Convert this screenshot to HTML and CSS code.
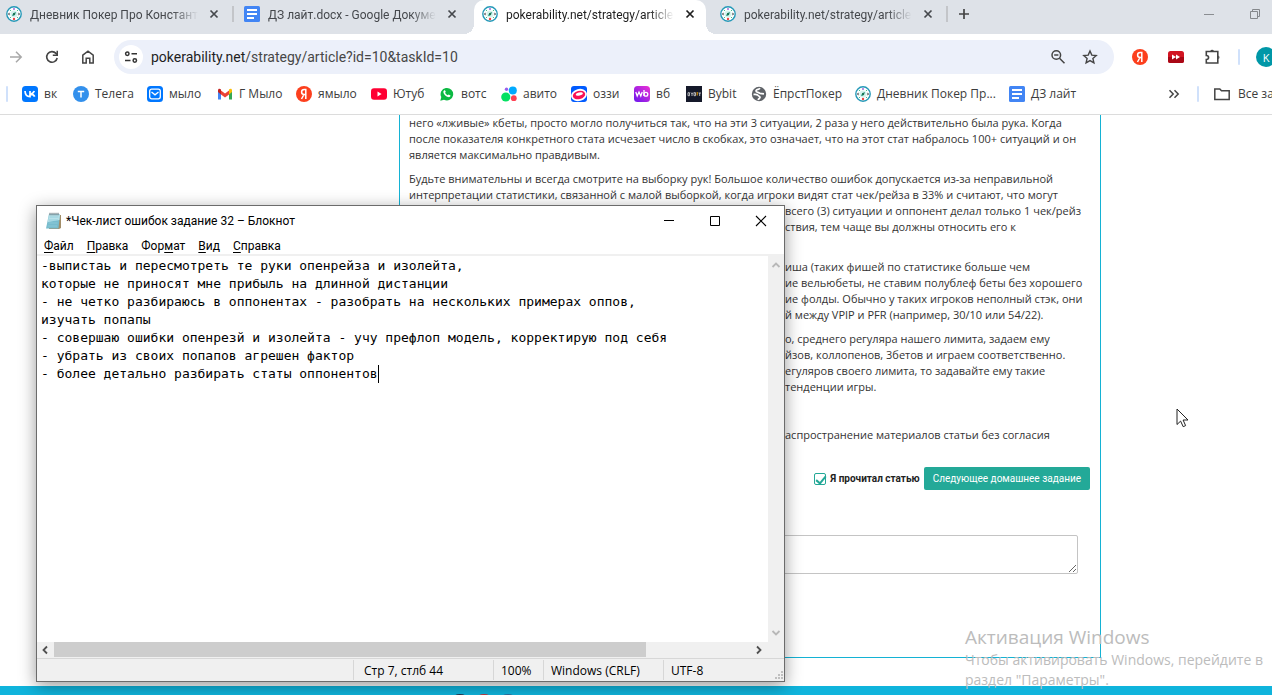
FILE: index.html
```
<!DOCTYPE html>
<html lang="ru">
<head>
<meta charset="utf-8">
<title>pokerability.net/strategy/article</title>
<link rel="stylesheet" href="styles.css">
</head>
<body>
<svg class="defs" aria-hidden="true">
  <symbol id="poker" viewBox="0 0 16 16">
    <circle cx="8" cy="8" r="7.2" fill="#fff" stroke="#2499b8" stroke-width="1.4"/>
    <circle cx="8" cy="8" r="3.600" fill="#d4f3ee"/>
    <path d="M6 9.500l1.500-2.500 2.500-1-1 3-2 1z" fill="#29977e"/>
    <circle cx="8" cy="8" r="1" fill="#176a48"/>
    <circle cx="8" cy="3" r="1" fill="#a56ad8"/><circle cx="8" cy="13" r="1.200" fill="#ee4545"/>
    <path d="M2 8l1.500-1.500V9.500zM14 8l-1.500-1.500V9.500z" fill="#222"/>
    <circle cx="4.500" cy="4.500" r=".6" fill="#2bb673"/><circle cx="11.500" cy="4.500" r=".6" fill="#2bb673"/><circle cx="4.500" cy="11.500" r=".6" fill="#2bb673"/><circle cx="11.500" cy="11.500" r=".6" fill="#2bb673"/>
  </symbol>
  <symbol id="docs" viewBox="0 0 16 16">
    <rect width="16" height="16" rx="1.500" fill="#4285f4"/>
    <path d="M3 4h10M3 8h10M3 12h7" stroke="#fff" stroke-width="2"/>
  </symbol>
  <symbol id="close" viewBox="0 0 16 16">
    <path d="M4.500 4.500l7 7M11.500 4.500l-7 7" stroke="currentColor" stroke-width="1.700" fill="none"/>
  </symbol>
  <symbol id="yandex" viewBox="0 0 16 16">
    <circle cx="8" cy="8" r="8" fill="#fc3f1d"/>
    <path d="M9.800 13V3.500H8.300C6.500 3.500 5.600 4.500 5.600 6c0 1.600.9 2.500 2.700 2.500h1.500M8 8.500L5.500 13" fill="none" stroke="#fff" stroke-width="1.500"/>
  </symbol>
</svg>

<div class="browser">
  <header class="chrome">
    <div class="tabstrip">
      <div class="tab tab-first"><svg class="ico"><use href="#poker"/></svg><span class="tab-title">Дневник Покер Про Константи</span><button class="icon-btn" aria-label="Закрыть"><svg class="ico"><use href="#close"/></svg></button></div>
      <span class="tab-gap tab-sep"></span>
      <div class="tab"><svg class="ico"><use href="#docs"/></svg><span class="tab-title">ДЗ лайт.docx - Google Докуме</span><button class="icon-btn" aria-label="Закрыть"><svg class="ico"><use href="#close"/></svg></button></div>
      <span class="tab-gap"></span>
      <div class="tab tab-active"><svg class="ico"><use href="#poker"/></svg><span class="tab-title">pokerability.net/strategy/article</span><button class="icon-btn" aria-label="Закрыть"><svg class="ico"><use href="#close"/></svg></button></div>
      <span class="tab-gap"></span>
      <div class="tab"><svg class="ico"><use href="#poker"/></svg><span class="tab-title">pokerability.net/strategy/article</span><button class="icon-btn" aria-label="Закрыть"><svg class="ico"><use href="#close"/></svg></button></div>
      <span class="tab-gap tab-sep"></span>
      <button class="icon-btn new-tab" aria-label="Новая вкладка"><svg class="ico" viewBox="0 0 16 16"><path d="M8 3v10M3 8h10" stroke="#444" stroke-width="1.700"/></svg></button>
      <div class="window-btns">
        <button class="icon-btn" aria-label="Свернуть"><svg class="ico" viewBox="0 0 16 16"><path d="M3 8.500h10" stroke="#8a8d91"/></svg></button>
        <button class="icon-btn" aria-label="Свернуть в окно"><svg class="ico" viewBox="0 0 16 16"><path d="M3.500 5.500h7v7h-7zM5.500 5.500v-2h7v7h-2" fill="none" stroke="#85888c"/></svg></button>
      </div>
    </div>

    <div class="toolbar">
      <div class="nav">
        <button class="icon-btn" aria-label="Вперёд"><svg class="ico" viewBox="0 0 16 16"><path d="M2 8h11M8 2.800L13.200 8 8 13.200" fill="none" stroke="#a8a8a8" stroke-width="1.500"/></svg></button>
        <button class="icon-btn" aria-label="Обновить"><svg class="ico" viewBox="0 0 16 16"><path d="M13.200 9A5.300 5.300 0 1 1 12 4.400l1 1.100" fill="none" stroke="#444" stroke-width="1.600"/><path d="M14 1.800V7H8.800V5.500h3.700V1.800z" fill="#444"/></svg></button>
        <button class="icon-btn" aria-label="Домой"><svg class="ico" viewBox="0 0 16 16"><path d="M2.800 6.200L8 2.200l5.200 4V14H9.800V9.300H6.200V14H2.800z" fill="none" stroke="#444" stroke-width="1.500"/></svg></button>
      </div>
      <div class="omnibox">
        <button class="icon-btn site-info" aria-label="Сведения о сайте"><svg class="ico" viewBox="0 0 16 16"><g fill="none" stroke="#333" stroke-width="1.500"><circle cx="4.300" cy="4.800" r="1.700"/><path d="M8.500 4.800H14M2 11.500h5.500"/><circle cx="11.800" cy="11.500" r="1.700"/></g></svg></button>
        <a class="url" href="#"><span class="host">pokerability.net</span>/strategy/article?id=10&amp;taskId=10</a>
        <button class="icon-btn" aria-label="Масштаб"><svg class="ico" viewBox="0 0 16 16"><g fill="none" stroke="#444" stroke-width="1.500"><circle cx="6.300" cy="6" r="4.300"/><path d="M9.500 9.200l5 5M4.200 6h4.200"/></g></svg></button>
        <button class="icon-btn" aria-label="Добавить в закладки"><svg class="ico" viewBox="0 0 16 16"><path d="M8 2l1.800 4.100 4.400.4-3.300 3 1 4.400L8 11.600l-3.900 2.300 1-4.400-3.300-3 4.400-.4z" fill="none" stroke="#444" stroke-width="1.400"/></svg></button>
      </div>
      <div class="extensions">
        <button class="icon-btn" aria-label="Яндекс"><svg class="ico"><use href="#yandex"/></svg></button>
        <button class="icon-btn" aria-label="Ускорение видео"><svg class="ico" viewBox="0 0 16 16"><rect y="2" width="16" height="12" rx="2.500" fill="#d21522"/><path d="M0 8h16v4a2 2 0 0 1-2 2H2a2 2 0 0 1-2-2z" fill="#a90715"/><path d="M4 5.500L8 8l-4 2.500zM8 5.500L12 8l-4 2.500z" fill="#fff"/></svg></button>
        <button class="icon-btn" aria-label="Расширения"><svg class="ico" viewBox="0 0 16 16"><path d="M2.300 2.500h11.500v11.500h-11.500v-3.500c3 0 3-4 0-4z" fill="none" stroke="#444" stroke-width="1.600"/><path d="M6.300 2a1.900 1.900 0 0 1 3.600 0zM14.200 6.400a1.900 1.900 0 0 1 0 3.600z" fill="#444"/></svg></button>
        <span class="divider"></span>
        <button class="avatar" aria-label="Профиль">K</button>
      </div>
    </div>

    <nav class="bookmarks">
      <span class="divider"></span>
      <div class="bm-list">
        <a class="bm" href="#"><svg class="ico" viewBox="0 0 16 16"><rect width="16" height="16" rx="3.500" fill="#07f"/><path d="M3 5c.2 3.500 2 5.700 5 5.700V5M8 8c2 0 3.500-1.200 4.300-3M8 7.800c2 .2 3.900 1 4.700 2.900" fill="none" stroke="#fff" stroke-width="1.700"/></svg>вк</a>
        <a class="bm" href="#"><svg class="ico" viewBox="0 0 16 16"><circle cx="8" cy="8" r="8" fill="#3390ec"/><path d="M4.800 5.500h6.400M8 5.500v6" stroke="#fff" stroke-width="1.500"/></svg>Телега</a>
        <a class="bm" href="#"><svg class="ico" viewBox="0 0 16 16"><rect width="16" height="16" rx="3.500" fill="#07f"/><rect x="2.700" y="3.200" width="10.600" height="9.600" rx="2" fill="none" stroke="#fff" stroke-width="1.300"/><path d="M4.500 6L8 8.800 11.500 6" fill="none" stroke="#fff" stroke-width="1.300"/></svg>мыло</a>
        <a class="bm" href="#"><svg class="ico" viewBox="0 0 16 16"><path d="M1 4v9.500h3V7z" fill="#4285f4"/><path d="M15 4v9.500h-3V7z" fill="#34a853"/><path d="M4 4.500L8 7.500l4-3v4l-4 3-4-3z" fill="#ea4335"/><path d="M1 4.500C1 2.500 2.700 2.300 4 3.500v5L1 6z" fill="#c5221f"/><path d="M15 4.500c0-2-1.700-2.200-3-1v5L15 6z" fill="#fbbc04"/></svg>Г Мыло</a>
        <a class="bm" href="#"><svg class="ico"><use href="#yandex"/></svg>ямыло</a>
        <a class="bm" href="#"><svg class="ico" viewBox="0 0 16 16"><rect y="2.300" width="16" height="11.400" rx="3" fill="#ff0033"/><path d="M6.500 5.500L10.600 8l-4.100 2.500z" fill="#fff"/></svg>Ютуб</a>
        <a class="bm" href="#"><svg class="ico" viewBox="0 0 16 16"><path d="M1.300 14.800l1-3.700A6.300 6.300 0 1 1 5 13.800z" fill="#0cb943"/><path d="M5 4.500c.8-.8 1.300-.2 1.800 1.300l-.7.900c.6 1.200 1.400 2 2.700 2.500l.8-.8 1.900 1c0 1.500-1.400 2-2.600 1.600C6.500 10.200 4.500 8 4.300 6c0-.6.200-1 .7-1.500z" fill="#fff"/></svg>вотс</a>
        <a class="bm" href="#"><svg class="ico" viewBox="0 0 16 16"><circle cx="4.800" cy="11" r="4.600" fill="#04e061"/><circle cx="11.800" cy="4.500" r="4" fill="#00aaff"/><circle cx="12.800" cy="12.200" r="2.900" fill="#ff4053"/><circle cx="5.500" cy="3.300" r="1.700" fill="#965eeb"/></svg>авито</a>
        <a class="bm" href="#"><svg class="ico" viewBox="0 0 16 16"><rect width="16" height="16" rx="3" fill="#005bff"/><ellipse cx="8" cy="9" rx="8" ry="6" transform="rotate(-14 8 9)" fill="#fff"/><ellipse cx="8" cy="9" rx="6.300" ry="4.200" transform="rotate(-14 8 9)" fill="#f91155"/><ellipse cx="8.300" cy="8" rx="3.600" ry="1.500" transform="rotate(-14 8.300 8)" fill="#fff"/></svg>оззи</a>
        <a class="bm" href="#"><svg class="ico" viewBox="0 0 16 16"><defs><linearGradient id="wb" x1="0" y1="1" x2="1" y2="0"><stop stop-color="#6a17ee"/><stop offset="1" stop-color="#ed30d4"/></linearGradient></defs><rect width="16" height="16" rx="3.500" fill="url(#wb)"/><path d="M1.800 6l1.400 4L5 6l1.800 4L8.200 6M10 4v6" fill="none" stroke="#fff" stroke-width="1.300"/><circle cx="11.900" cy="8.300" r="1.900" fill="none" stroke="#fff" stroke-width="1.300"/></svg>вб</a>
        <a class="bm" href="#"><svg class="ico" viewBox="0 0 16 16"><path d="M0 0h16v16H0z" fill="#15192a"/><path d="M2 6.700v3h1.500v-3zM5 6.500l1 1.500 1-1.500M6 8v2M8 6.700v3h1.500v-3zM12.500 7h2.500M13.700 7v3" fill="none" stroke="#ddd" stroke-width=".8"/><path d="M11.200 6v3.500" stroke="#f7a600"/></svg>Bybit</a>
        <a class="bm" href="#"><svg class="ico" viewBox="0 0 16 16"><circle cx="8" cy="8" r="7.200" fill="#5f6368"/><path d="M9 2.300c-1 1.500-3.500.8-4 2.500-.3 1.600 2.500 1.400 3.500 2.400.8.800 2 .3 4.500.6M2.500 8.300c2 .2 4-.2 4.500 1 .5 1.300 2.200.7 2 2.200-.2 1-1.500 1.300-2 2.300" fill="none" stroke="#fff" stroke-width="1.700"/></svg>ЁпрстПокер</a>
        <a class="bm" href="#"><svg class="ico"><use href="#poker"/></svg>Дневник Покер Пр...</a>
        <a class="bm" href="#"><svg class="ico"><use href="#docs"/></svg>ДЗ лайт</a>
      </div>
      <div class="bm-more">
        <button class="icon-btn" aria-label="Другие закладки"><svg class="ico" viewBox="0 0 16 16"><path d="M3.500 4.300L7.200 8l-3.700 3.700M8.500 4.300L12.200 8l-3.700 3.700" fill="none" stroke="#444" stroke-width="1.500"/></svg></button>
        <span class="divider"></span>
        <a class="bm" href="#"><svg class="ico" viewBox="0 0 16 16"><path d="M.8 3h5l1.700 1.800h7.700v8.700H.8z" fill="none" stroke="#444" stroke-width="1.500"/></svg>Все за</a>
      </div>
    </nav>
  </header>

  <main class="page">
    <article class="card">
      <p>него «лживые» кбеты, просто могло получиться так, что на эти 3 ситуации, 2 раза у него действительно была рука. Когда<br>после показателя конкретного стата исчезает число в скобках, это означает, что на этот стат набралось 100+ ситуаций и он<br>является максимально правдивым.</p>
      <p>Будьте внимательны и всегда смотрите на выборку рук! Большое количество ошибок допускается из-за неправильной<br>интерпретации статистики, связанной с малой выборкой, когда игроки видят стат чек/рейза в 33% и считают, что могут</p>
      <div class="behind">
        <p>всего (3) ситуации и оппонент делал только 1 чек/рейз<br>ствия, тем чаще вы должны относить его к<br>&nbsp;</p>
        <p>иша (таких фишей по статистике больше чем<br>ие вельюбеты, не ставим полублеф беты без хорошего<br>ие фолды. Обычно у таких игроков неполный стэк, они<br>й между VPIP и PFR (например, 30/10 или 54/22).</p>
        <p>о, среднего регуляра нашего лимита, задаем ему<br>йзов, коллопенов, 3бетов и играем соответственно.<br>егуляров своего лимита, то задавайте ему такие<br>тенденции игры.</p>
        <p>&nbsp;</p>
        <p>аспространение материалов статьи без согласия<br>&nbsp;</p>
      </div>
      <div class="actions">
        <input type="checkbox" id="read" checked>
        <label for="read">Я прочитал статью</label>
        <button class="next">Следующее домашнее задание</button>
      </div>
      <textarea class="comment" aria-label="Комментарий"></textarea>
    </article>
  </main>

  <footer class="footer">
    <svg viewBox="0 0 80 9" width="80" height="9"><ellipse cx="20" cy="10" rx="5" ry="2" fill="#27344d"/><ellipse cx="44" cy="10" rx="5" ry="2" fill="#c8363b"/><ellipse cx="68" cy="10" rx="5" ry="2" fill="#2f6f9f"/></svg>
  </footer>
</div>

<section class="notepad" aria-label="Блокнот">
  <div class="np-title">
    <svg class="np-icon" viewBox="0 0 18 18"><path d="M5 3h11v13l-2 1H4z" fill="#a28d68"/><path d="M4 2h11l-1.500 14.500H1z" fill="#78bccd"/><path d="M4 2h11l-.6 6-11.500 2z" fill="#b8e1ea"/><path d="M4.500 5h9M4 8h9M3.500 11h9M3 14h9" stroke="#8fcbd9" stroke-width=".8"/><path d="M5 .8v2.500M7 .8v2.500M9 .8v2.500M11 .8v2.500M13 .8v2.500" stroke="#435861" stroke-width=".9"/></svg>
    <span class="np-name">*Чек-лист ошибок задание 32 – Блокнот</span>
    <button class="np-btn" aria-label="Свернуть"><svg viewBox="0 0 12 12"><path d="M1 5.500h10" stroke="#000"/></svg></button>
    <button class="np-btn" aria-label="Развернуть"><svg viewBox="0 0 12 12"><path d="M1.500 1.500h9v9h-9z" fill="none" stroke="#000"/></svg></button>
    <button class="np-btn" aria-label="Закрыть"><svg viewBox="0 0 12 12"><path d="M1 1l10 10M11 1L1 11" stroke="#000" stroke-width="1.100"/></svg></button>
  </div>
  <div class="np-menu">
    <button><u>Ф</u>айл</button><button><u>П</u>равка</button><button>Фор<u>м</u>ат</button><button><u>В</u>ид</button><button><u>С</u>правка</button>
  </div>
  <div class="np-body">
    <div class="np-edit">
      <textarea class="np-text" aria-label="Текст" spellcheck="false" wrap="off">-выпистаь и пересмотреть те руки опенрейза и изолейта,
которые не приносят мне прибыль на длинной дистанции
- не четко разбираюсь в оппонентах - разобрать на нескольких примерах оппов,
изучать попапы
- совершаю ошибки опенрезй и изолейта - учу префлоп модель, корректирую под себя
- убрать из своих попапов агрешен фактор
- более детально разбирать статы оппонентов</textarea>
      <span class="caret"></span>
    </div>
    <div class="vscroll">
      <svg viewBox="0 0 10 6"><path d="M1.500 5L5 1.500 8.500 5" fill="none" stroke="#b8b8b8" stroke-width="1.800"/></svg>
      <svg viewBox="0 0 10 6"><path d="M1.500 1L5 4.500 8.500 1" fill="none" stroke="#b8b8b8" stroke-width="1.800"/></svg>
    </div>
  </div>
  <div class="hscroll">
    <svg viewBox="0 0 6 10"><path d="M5 1.500L1.500 5 5 8.500" fill="none" stroke="#505050" stroke-width="1.800"/></svg>
    <span class="track"><span class="thumb"></span></span>
    <svg viewBox="0 0 6 10"><path d="M1 1.500L4.500 5 1 8.500" fill="none" stroke="#505050" stroke-width="1.800"/></svg>
  </div>
  <div class="np-status">
    <span></span><span class="pos">Стр 7, стлб 44</span><span>100%</span><span>Windows (CRLF)</span><span>UTF-8</span>
    <svg class="grip" viewBox="0 0 10 10"><path d="M7 0h2v2H7zM4 3h2v2H4zM7 3h2v2H7zM1 6h2v2H1zM4 6h2v2H4zM7 6h2v2H7z" fill="#bfbfbf"/></svg>
  </div>
</section>

<div class="watermark">
  <strong>Активация Windows</strong>
  <span>Чтобы активировать Windows, перейдите в<br>раздел "Параметры".</span>
</div>

<svg class="cursor" viewBox="0 0 13 20"><path d="M1 1v15.500l3.600-3.400 2.600 5.600 2.400-1.100L7.100 12H12z" fill="#fff" stroke="#222"/></svg>
</body>
</html>
```
FILE: styles.css
```
* { box-sizing: border-box; }

body {
  margin: 0;
  height: 100vh;
  overflow: hidden;
  background: #fff;
  color: #333;
  font-family: "Open Sans", "Noto Sans", sans-serif;
  font-size: 12px;
}

button {
  border: 0;
  padding: 0;
  background: none;
  color: inherit;
  font: inherit;
}

a { color: inherit; text-decoration: none; }

.defs { position: absolute; width: 0; height: 0; }
.ico { width: 16px; height: 16px; flex: none; display: block; }
.icon-btn { display: flex; align-items: center; justify-content: center; flex: none; }
.divider { width: 2px; height: 16px; flex: none; border-radius: 1px; background: #d0e1fb; }

.browser { height: 100%; display: flex; flex-direction: column; }

/* Browser chrome */
.chrome { flex: none; border-bottom: 1px solid #dcdcdc; }

.tabstrip {
  display: flex;
  height: 34px;
  background: #dee2e8;
  color: #45484c;
  font-family: Roboto, "Open Sans", sans-serif;
}

.tab {
  display: flex;
  align-items: center;
  gap: 8px;
  width: 232px;
  height: 34px;
  padding: 0 8px 6px;
  flex: none;
}
.tab-first { width: 230px; padding-left: 6px; }
.tab-title {
  flex: 1;
  min-width: 0;
  padding-top: 2px;
  overflow: hidden;
  white-space: nowrap;
  line-height: 18px;
  -webkit-mask-image: linear-gradient(90deg, #000 85%, transparent);
  mask-image: linear-gradient(90deg, #000 85%, transparent);
}
.tab-active {
  position: relative;
  border-radius: 10px 10px 0 0;
  background: #fff;
  color: #1f1f1f;
}
.tab-active::before,
.tab-active::after {
  content: "";
  position: absolute;
  bottom: 0;
  width: 10px;
  height: 10px;
}
.tab-active::before { right: 100%; background: radial-gradient(circle at 0 0, transparent 10px, #fff 10px); }
.tab-active::after { left: 100%; background: radial-gradient(circle at 100% 0, transparent 10px, #fff 10px); }

.tab-gap { width: 6px; flex: none; padding: 6px 2px 0; }
.tab-sep::before { content: ""; display: block; width: 2px; height: 16px; background: #c3c5c9; }
.new-tab { width: 28px; height: 28px; }
.window-btns { display: flex; gap: 30px; height: 28px; margin-left: auto; padding-right: 9px; }

.toolbar { display: flex; align-items: center; height: 46px; }
.nav { display: flex; gap: 20px; padding: 0 18px 0 8px; }
.omnibox {
  flex: 1;
  display: flex;
  align-items: center;
  gap: 16px;
  height: 34px;
  padding: 0 16px 0 5px;
  border-radius: 17px;
  background: #ecf0fa;
}
.site-info { width: 24px; height: 24px; border-radius: 50%; background: #fff; }
.url { flex: 1; margin-left: -8px; font: 14px/20px Roboto, "Open Sans", sans-serif; white-space: nowrap; color: #474747; }
.host { color: #1f1f1f; }
.extensions { display: flex; align-items: center; gap: 20px; padding-left: 18px; width: 158px; overflow: hidden; }
.extensions .divider { margin: 0 -4px 0 -2px; }
.avatar {
  width: 20px;
  height: 20px;
  flex: none;
  border-radius: 50%;
  background: #0097a7;
  color: #fff;
  font-size: 11px;
}

.bookmarks { display: flex; align-items: center; height: 34px; padding: 0 0 6px 6px; color: #3c3c3c; }
.bm-list {
  flex: 1;
  display: grid;
  grid-template-columns: 51px 74px 70px 79px 75px 68px 62px 70px 63px 52px 65px 104px 154px auto;
  padding-left: 14px;
}
.bm { display: flex; align-items: center; gap: 6px; white-space: nowrap; line-height: 18px; }
.bm-more { display: flex; align-items: center; width: 106px; gap: 15px; }
.bm-more .bm { gap: 8px; }

/* Article page */
.page {
  flex: 1;
  min-height: 0;
  display: grid;
  grid-template-columns: 399px minmax(0, 702px) 1fr;
  align-items: start;
}
.card {
  grid-column: 2;
  padding: 0 10px 83px 9px;
  border: 1px solid #14b2d4;
  border-top: 0;
  font-size: 11px;
  line-height: 16px;
}
.card p { margin: 0 0 8px; white-space: nowrap; }
.behind { margin-top: -8px; padding-left: 376px; }

.actions {
  display: flex;
  align-items: center;
  justify-content: flex-end;
  gap: 4px;
  font-family: Roboto, "Open Sans", sans-serif;
  font-size: 10px;
}
.actions input {
  appearance: none;
  position: relative;
  width: 12px;
  height: 12px;
  margin: 0;
  border: 1px solid #23a897;
  border-radius: 2px;
}
.actions input:checked::before {
  content: "";
  position: absolute;
  left: 3px;
  top: 0;
  width: 4px;
  height: 8px;
  border: solid #23a897;
  border-width: 0 2px 2px 0;
  transform: rotate(40deg);
}
.actions label { font-weight: 700; color: #222; }
.next {
  height: 23px;
  padding: 0 9px;
  border-radius: 2px;
  background: #23a998;
  color: #fff;
}
.comment {
  display: block;
  width: calc(100% - 12px);
  height: 39px;
  margin-top: 45px;
  border: 1px solid #c4c4c4;
  border-radius: 2px;
}

.footer { flex: none; height: 9px; padding-left: 440px; background: #10b4dc; }
.footer svg { display: block; }

/* Notepad window */
.notepad {
  position: absolute;
  left: 36px;
  top: 205px;
  width: 749px;
  height: 477px;
  display: flex;
  flex-direction: column;
  border: 1px solid #6b6b6b;
  background: #fff;
  color: #000;
  box-shadow: 0 4px 16px rgba(0, 0, 0, .4);
}
.np-title,
.np-menu { font-family: Roboto, "Open Sans", sans-serif; }
.np-title { display: flex; align-items: center; height: 29px; padding-left: 8px; }
.np-icon { width: 18px; height: 18px; margin-right: 3px; }
.np-name { flex: 1; white-space: nowrap; }
.np-btn { display: grid; place-items: center; width: 46px; height: 29px; }
.np-btn svg { width: 12px; height: 12px; }
.np-menu { display: flex; gap: 13px; height: 21px; padding: 2px 7px 0; border-bottom: 2px solid #f0f0f0; line-height: 18px; }
.np-menu u { text-underline-offset: 2px; }
.np-body { flex: 1; display: flex; min-height: 0; }
.np-edit {
  position: relative;
  flex: 1;
  font: 13px/18px "DejaVu Sans Mono", monospace;
}
.np-text {
  display: block;
  width: 100%;
  height: 100%;
  padding: 1px 4px;
  border: 0;
  outline: 0;
  resize: none;
  overflow: hidden;
  font: inherit;
  color: inherit;
  background: none;
}
.caret { position: absolute; left: calc(4px + 43ch); top: 109px; width: 1px; height: 18px; background: #000; }
.vscroll {
  display: flex;
  flex-direction: column;
  justify-content: space-between;
  align-items: center;
  width: 16px;
  padding: 6px 0;
  background: #f0f0f0;
}
.vscroll svg { width: 10px; height: 6px; }
.hscroll { display: flex; align-items: center; height: 16px; padding: 0 22px 0 5px; gap: 6px; background: #f0f0f0; }
.hscroll svg { width: 6px; height: 10px; }
.track { flex: 1; height: 15px; align-self: flex-start; }
.thumb { display: block; width: 85%; height: 100%; background: #cdcdcd; }
.np-status {
  position: relative;
  display: grid;
  grid-template-columns: 316px 140px 50px 120px 1fr;
  height: 23px;
  padding-top: 1px;
  border-top: 1px solid #d7d7d7;
  background: #f0f0f0;
  line-height: 22px;
}
.np-status span { height: 20px; padding-left: 7px; border-left: 1px solid #d7d7d7; white-space: nowrap; }
.np-status span:first-child { border-left: 0; }
.np-status .pos { padding-left: 10px; }
.grip { position: absolute; right: 0; bottom: 0; width: 10px; height: 10px; }

/* System overlay */
.watermark {
  position: absolute;
  left: 965px;
  top: 624px;
  color: #bcbcbc;
  font-size: 14px;
  line-height: 20px;
  white-space: nowrap;
}
.watermark strong { display: block; font-size: 19px; font-weight: 400; line-height: 26px; }
.watermark span { display: block; }
.cursor { position: absolute; left: 1176px; top: 408px; width: 13px; height: 20px; }
```
